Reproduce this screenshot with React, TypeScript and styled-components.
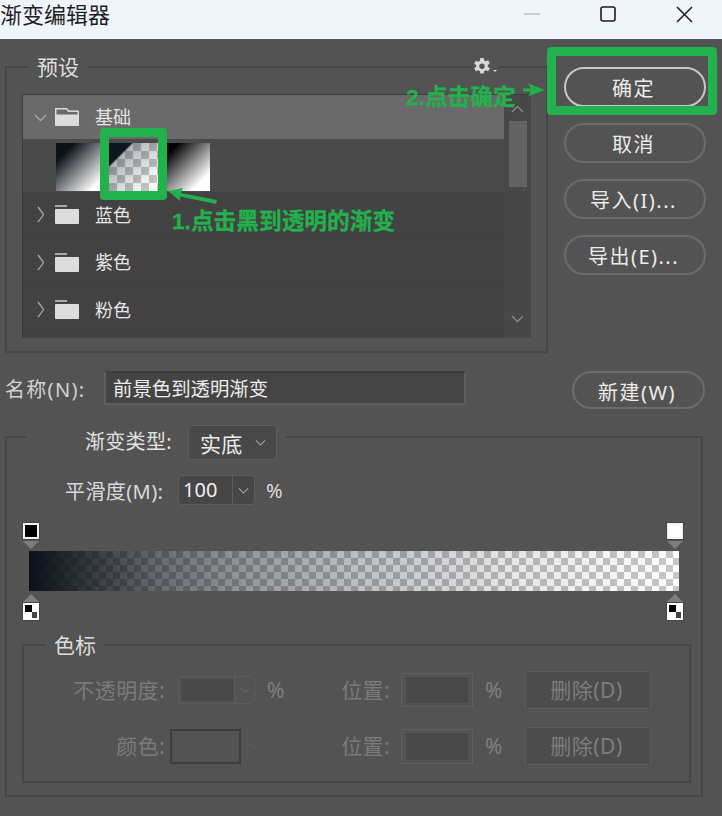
import React from 'react'
import styled, { createGlobalStyle } from 'styled-components'

const green = '#22b14c'
const checker = 'repeating-conic-gradient(#c6c6c6 0 25%, #ffffff 0 50%) 0 0 / 14px 14px'
const thumbChecker = 'repeating-conic-gradient(#c6c6c6 0 25%, #ffffff 0 50%) 0 0 / 16px 16px'

const GlobalStyle = createGlobalStyle`
  html, body {
    margin: 0;
    padding: 0;
    background: #535353;
  }
  * {
    box-sizing: border-box;
  }
`

const Page = styled.div`
  position: relative;
  width: 722px;
  height: 816px;
  overflow: hidden;
  background: #535353;
  color: #e4e4e4;
  font-family: "Noto Sans", "Noto Sans CJK SC", sans-serif;
  font-size: 19px;
`

// Window title bar
const TitleBar = styled.div`
  height: 39px;
  display: flex;
  align-items: flex-start;
  justify-content: space-between;
  background: #f0f4fb;
  color: #1f1f1f;
`

const Title = styled.div`
  font-size: 22px;
  line-height: 29px;
`

const WindowButtons = styled.div`
  display: flex;
`

const WindowButton = styled.div`
  width: 76px;
  height: 28px;
  display: flex;
  align-items: center;
  justify-content: center;
`

const Content = styled.div`
  padding: 15px 16px 0 5px;
`

const TopRow = styled.div`
  display: flex;
  gap: 16px;
`

// Sunken group box with the caption sitting on its border
const Group = styled.fieldset`
  position: relative;
  margin: 0;
  padding: 0;
  min-width: 0;
  border: 2px solid #464646;
`

const Caption = styled.legend<{ $left: number }>`
  margin-left: ${p => p.$left}px;
  padding: 0 8px;
  height: 26px;
  line-height: 26px;
  font-size: 21px;
  color: #dedede;
`

const PresetGroup = styled(Group)`
  width: 543px;
  height: 299px;
  padding: 14px 15px 0 15px;
`

const GearBox = styled.div`
  position: absolute;
  top: -23px;
  right: 47px;
  width: 27px;
  height: 20px;
  display: flex;
  align-items: center;
  justify-content: center;
  background: #535353;
`

const List = styled.div`
  display: flex;
  height: 244px;
  background: #424242;
  border: solid #3a3a3a;
  border-width: 1px 0 0 1px;
`

const ListRows = styled.div`
  width: 481px;
`

const FolderRow = styled.div<{ $active?: boolean; $h: number }>`
  height: ${p => p.$h}px;
  display: flex;
  align-items: center;
  padding-left: 11px;
  background: ${p => (p.$active ? '#6a6a6a' : '#424242')};
  border-bottom: ${p => (p.$active ? 'none' : '1px solid #3e3e3e')};
  font-size: 18px;
  color: #e6e6e6;
`

const ChevronSlot = styled.div<{ $inset?: number }>`
  width: 21px;
  display: flex;
  align-items: center;
  padding-left: ${p => p.$inset ?? 0}px;
`

const FolderName = styled.span`
  margin-left: 16px;
  padding-bottom: 2px;
`

const ThumbRow = styled.div`
  height: 53px;
  display: flex;
  align-items: flex-end;
  padding: 0 0 1px 33px;
  background: #4a4a4a;
`

const Thumb = styled.div<{ $fill: string; $w: number }>`
  width: ${p => p.$w}px;
  height: 48px;
  background: ${p => p.$fill};
`

const ScrollTrack = styled.div`
  flex: 1;
  display: flex;
  flex-direction: column;
  align-items: center;
  padding-top: 8px;
  background: #474747;
`

const ScrollThumb = styled.div`
  width: 18px;
  height: 66px;
  margin: 5px 0 125px;
  background: #636363;
`

const ButtonColumn = styled.div`
  display: flex;
  flex-direction: column;
  gap: 16px;
  padding-top: 13px;
`

const PillButton = styled.div<{ $primary?: boolean; $w?: number; $h?: number }>`
  width: ${p => p.$w ?? 142}px;
  height: ${p => p.$h ?? 40}px;
  display: flex;
  align-items: center;
  justify-content: center;
  padding-right: 3px;
  border-radius: 20px;
  border: ${p => (p.$primary ? '2px solid #c8c8c8' : '2px solid #6c6c6c')};
  font-size: 20px;
  letter-spacing: 1.5px;
  color: #ececec;
`

const NameRow = styled.div`
  display: flex;
  align-items: flex-start;
  margin-top: 18px;
`

const NameLabel = styled.div`
  width: 99px;
  height: 34px;
  padding-top: 2px;
  line-height: 34px;
  font-size: 20px;
  letter-spacing: 1.3px;
  color: #d2d2d2;
`

const NameInput = styled.div`
  width: 362px;
  height: 34px;
  line-height: 32px;
  padding-left: 7px;
  background: #444444;
  border: 2px solid #5e5e5e;
  border-top-color: #3f3f3f;
  font-size: 19.400px;
  color: #ececec;
`

const NewButton = styled(PillButton)`
  margin-left: 106px;
  padding-top: 2px;
`

const GradientGroup = styled(Group)`
  width: 698px;
  height: 372px;
  margin-top: 16px;
`

const TypeCaption = styled.legend`
  display: flex;
  align-items: flex-start;
  height: 24px;
  margin-left: 19px;
  padding: 0 9px 0 59px;
  font-size: 20px;
  letter-spacing: 0.3px;
  color: #e2e2e2;
`

const TypeLabel = styled.span`
  line-height: 33px;
  width: 103px;
`

const Select = styled.div`
  width: 89px;
  height: 35px;
  display: flex;
  align-items: center;
  justify-content: space-between;
  padding: 0 10px 0 11px;
  background: #484848;
  border: 1px solid #5e5e5e;
  border-radius: 4px;
  font-size: 21px;
  color: #ececec;
`

const SmoothRow = styled.div`
  display: flex;
  align-items: center;
  height: 30px;
  margin-top: 26px;
  padding-left: 58px;
`

const SmoothLabel = styled.span`
  width: 113px;
  font-size: 20px;
  letter-spacing: 0.4px;
  color: #dadada;
`

const Combo = styled.div<{ $off?: boolean; $h: number }>`
  width: 77px;
  height: ${p => p.$h}px;
  display: flex;
  background: ${p => (p.$off ? '#535353' : '#464646')};
  border: 1px solid ${p => (p.$off ? '#5c5c5c' : '#5e5e5e')};
  border-radius: 4px;
`

const ComboText = styled.div<{ $off?: boolean }>`
  width: 53px;
  padding-left: 4px;
  margin: ${p => (p.$off ? '2px 0 2px 2px' : 0)};
  background: ${p => (p.$off ? '#484848' : 'transparent')};
  font-size: 20px;
  line-height: 28px;
  color: #f0f0f0;
`

const ComboArrow = styled.div`
  flex: 1;
  display: flex;
  align-items: center;
  justify-content: center;
  border-left: 1px solid #5e5e5e;
`

const Percent = styled.span<{ $off?: boolean }>`
  margin-left: ${p => (p.$off ? 12 : 11)}px;
  font-size: ${p => (p.$off ? 21 : 20)}px;
  color: ${p => (p.$off ? '#7f7f7f' : '#dcdcdc')};
`

// Gradient strip with its stops
const Editor = styled.div`
  position: relative;
  height: 97px;
  margin: 18px 22px 0 22px;
  padding-top: 28px;
`

const GradientBar = styled.div`
  height: 40px;
  background: linear-gradient(
      90deg,
      rgba(11, 16, 24, 1) 0%,
      rgba(11, 16, 24, 0.8) 11%,
      rgba(11, 16, 24, 0.62) 20%,
      rgba(11, 16, 24, 0.45) 32%,
      rgba(11, 16, 24, 0.27) 50%,
      rgba(11, 16, 24, 0.1) 75%,
      rgba(11, 16, 24, 0) 100%
    ),
    ${checker};
`

const Stop = styled.div<{ $side: 'left' | 'right'; $bottom?: boolean }>`
  position: absolute;
  ${p => (p.$side === 'left' ? 'left: -6px;' : 'right: -4px;')}
  ${p => (p.$bottom ? 'bottom: 0;' : 'top: 0;')}
  display: flex;
  flex-direction: ${p => (p.$bottom ? 'column-reverse' : 'column')};
  align-items: center;
`

const StopBox = styled.div<{ $fill: string }>`
  width: 16px;
  height: 16px;
  background: ${p => p.$fill};
  border: 2px solid #f4f4f4;
  outline: 1px solid #444444;
`

const OpacityBox = styled.div`
  position: relative;
  width: 16px;
  height: 17px;
  background: #ffffff;
  outline: 1px solid #444444;
  &::before {
    content: '';
    position: absolute;
    left: 2px;
    top: 2px;
    width: 7px;
    height: 7px;
    background: #000000;
  }
  &::after {
    content: '';
    position: absolute;
    right: 2px;
    bottom: 2px;
    width: 5px;
    height: 6px;
    background: #444444;
  }
`

const Triangle = styled.div<{ $up?: boolean }>`
  width: 16px;
  height: 8px;
  margin: ${p => (p.$up ? '0 0 1px' : '2px 0 0')};
  background: #7e7e7e;
  clip-path: ${p =>
    p.$up ? 'polygon(50% 0, 100% 100%, 0 100%)' : 'polygon(0 0, 100% 0, 50% 100%)'};
`

const StopsGroup = styled(Group)`
  width: 669px;
  height: 151px;
  margin: 12px 0 0 15px;
`

const StopsGrid = styled.div`
  display: grid;
  grid-template-columns: 141px 163px 62px 135px 126px;
  grid-auto-rows: 38px;
  row-gap: 18px;
  align-items: center;
  padding-top: 13px;
`

const DimLabel = styled.div`
  padding-bottom: 2px;
  text-align: right;
  font-size: 21px;
  letter-spacing: 0.4px;
  color: #7b7b7b;
`

const ControlCell = styled.div<{ $left: number }>`
  display: flex;
  align-items: center;
  padding-left: ${p => p.$left}px;
`

const Swatch = styled.div`
  width: 71px;
  height: 35px;
  margin-right: 7px;
  background: #535353;
  border: 2px solid #3d3d3d;
`

const DimInput = styled.div<{ $h: number }>`
  width: 72px;
  height: ${p => p.$h}px;
  padding: 3px 4px;
  border: 1px solid #5f5f5f;
  &::before {
    content: '';
    display: block;
    height: 100%;
    background: #484848;
  }
`

const DimButton = styled.div`
  height: 38px;
  display: flex;
  align-items: center;
  justify-content: center;
  padding: 0 3px 2px 0;
  background: #4c4c4c;
  border: 1px solid #5c5c5c;
  border-radius: 3px;
  font-size: 21px;
  letter-spacing: 0.5px;
  color: #7d7d7d;
`

// Green notes drawn on top of the screenshot
const Ring = styled.div<{ $x: number; $y: number; $w: number; $h: number }>`
  position: absolute;
  left: ${p => p.$x}px;
  top: ${p => p.$y}px;
  width: ${p => p.$w}px;
  height: ${p => p.$h}px;
  border: 9px solid ${green};
  border-radius: 4px;
`

const Note = styled.div<{ $x: number; $y: number }>`
  position: absolute;
  left: ${p => p.$x}px;
  top: ${p => p.$y}px;
  font-family: "Liberation Sans", "Noto Sans CJK SC", sans-serif;
  font-size: 22.700px;
  font-weight: 700;
  line-height: 30px;
  white-space: nowrap;
  color: ${green};
  -webkit-text-stroke: 0.3px ${green};
`

const ArrowSvg = styled.svg<{ $x: number; $y: number }>`
  position: absolute;
  left: ${p => p.$x}px;
  top: ${p => p.$y}px;
`

function Chevron({ dir, color = '#a8a8a8', size = 13 }: { dir: 'up' | 'down'; color?: string; size?: number }) {
  const d = dir === 'down' ? 'M1 4l5.500 5.500L12 4' : 'M1 9l5.500-5.500L12 9'
  return (
    <svg width={size} height={size} viewBox="0 0 13 13" fill="none" stroke={color} strokeWidth={1.3}>
      <path d={d} />
    </svg>
  )
}

function ChevronRight() {
  return (
    <svg width="8" height="17" viewBox="0 0 8 17" fill="none" stroke="#a8a8a8" strokeWidth={1.3}>
      <path d="M1 1c2 2.500 4 5 5.500 7.500C5 11 3 13.500 1 16" />
    </svg>
  )
}

function Folder({ open }: { open?: boolean }) {
  if (open) {
    return (
      <svg width="24" height="18" viewBox="0 0 24 18" fill="#dcdcdc">
        <path
          fillRule="evenodd"
          d="M0 0h12l2 2.500h10V18H0zM1.500 1.500v5h21v-2.500H13.300l-2-2.500z"
        />
      </svg>
    )
  }
  return (
    <svg width="24" height="19" viewBox="0 0 24 19" fill="#dcdcdc">
      <path d="M0 0h12v2H0z" fill="#a8a8a8" />
      <path d="M1 4h22a1 1 0 0 1 1 1v13a1 1 0 0 1-1 1H1a1 1 0 0 1-1-1V5a1 1 0 0 1 1-1z" />
    </svg>
  )
}

function Gear() {
  return (
    <svg width="25" height="18" viewBox="0 0 25 18" fill="#d8d8d8">
      <path
        fillRule="evenodd"
        d="M7.300 0h3.400l.5 2.500 1.500.8 2.400-1 1.700 3-2 1.600v1.800l2 1.600-1.700 3-2.400-1-1.500.8-.5 2.500H7.300l-.5-2.500-1.500-.8-2.400 1-1.700-3 2-1.600V7.300l-2-1.600 1.700-3 2.400 1 1.500-.8zM9 5.500a2.700 2.700 0 1 0 0 5.400 2.700 2.700 0 0 0 0-5.400z"
      />
      <path d="M20 12h4l-2 2z" />
    </svg>
  )
}

const folders = [
  { name: '蓝色', h: 46 },
  { name: '紫色', h: 49 },
  { name: '粉色', h: 46 },
]

export default function App() {
  return (
    <Page>
      <GlobalStyle />
      <TitleBar>
        <Title>渐变编辑器</Title>
        <WindowButtons>
          <WindowButton>
            <svg width="16" height="2" viewBox="0 0 16 2">
              <path d="M0 1h16" stroke="#b8bbc2" strokeWidth="1.400" />
            </svg>
          </WindowButton>
          <WindowButton>
            <svg width="16" height="16" viewBox="0 0 16 16" fill="none">
              <rect x="1" y="1" width="14" height="14" rx="2" stroke="#1c1c1c" strokeWidth="1.600" />
            </svg>
          </WindowButton>
          <WindowButton>
            <svg width="17" height="17" viewBox="0 0 17 17" fill="none">
              <path d="M1 1l15 15M16 1L1 16" stroke="#1c1c1c" strokeWidth="1.500" />
            </svg>
          </WindowButton>
        </WindowButtons>
      </TitleBar>

      <Content>
        <TopRow>
          <PresetGroup>
            <Caption $left={7}>预设</Caption>
            <GearBox>
              <Gear />
            </GearBox>
            <List>
              <ListRows>
                <FolderRow $active $h={44}>
                  <ChevronSlot>
                    <Chevron dir="down" />
                  </ChevronSlot>
                  <Folder open />
                  <FolderName>基础</FolderName>
                </FolderRow>
                <ThumbRow>
                  <Thumb $w={53} $fill="linear-gradient(135deg, #0c1118 18%, #ffffff 82%)" />
                  <Thumb
                    $w={49}
                    $fill={`linear-gradient(135deg, #0c1520 23%, rgba(12, 21, 32, 0.32) 26%, rgba(12, 21, 32, 0) 88%), ${thumbChecker}`}
                  />
                  <Thumb $w={52} $fill="linear-gradient(135deg, #000000 20%, #ffffff 82%)" />
                </ThumbRow>
                {folders.map(f => (
                  <FolderRow key={f.name} $h={f.h}>
                    <ChevronSlot $inset={3}>
                      <ChevronRight />
                    </ChevronSlot>
                    <Folder />
                    <FolderName>{f.name}</FolderName>
                  </FolderRow>
                ))}
              </ListRows>
              <ScrollTrack>
                <Chevron dir="up" color="#8e8e8e" />
                <ScrollThumb />
                <Chevron dir="down" color="#8e8e8e" />
              </ScrollTrack>
            </List>
          </PresetGroup>
          <ButtonColumn>
            <PillButton $primary>确定</PillButton>
            <PillButton>取消</PillButton>
            <PillButton>导入(I)...</PillButton>
            <PillButton>导出(E)...</PillButton>
          </ButtonColumn>
        </TopRow>

        <NameRow>
          <NameLabel>名称(N):</NameLabel>
          <NameInput>前景色到透明渐变</NameInput>
          <NewButton $w={133} $h={38}>新建(W)</NewButton>
        </NameRow>

        <GradientGroup>
          <TypeCaption>
            <TypeLabel>渐变类型:</TypeLabel>
            <Select>
              实底
              <Chevron dir="down" size={11} />
            </Select>
          </TypeCaption>
          <SmoothRow>
            <SmoothLabel>平滑度(M):</SmoothLabel>
            <Combo $h={30}>
              <ComboText>100</ComboText>
              <ComboArrow>
                <Chevron dir="down" size={11} />
              </ComboArrow>
            </Combo>
            <Percent>%</Percent>
          </SmoothRow>

          <Editor>
            <Stop $side="left">
              <StopBox $fill="#000000" />
              <Triangle />
            </Stop>
            <Stop $side="right">
              <StopBox $fill="#ffffff" />
              <Triangle />
            </Stop>
            <GradientBar />
            <Stop $side="left" $bottom>
              <OpacityBox />
              <Triangle $up />
            </Stop>
            <Stop $side="right" $bottom>
              <OpacityBox />
              <Triangle $up />
            </Stop>
          </Editor>

          <StopsGroup>
            <Caption $left={22}>色标</Caption>
            <StopsGrid>
              <DimLabel>不透明度:</DimLabel>
              <ControlCell $left={13}>
                <Combo $off $h={28}>
                  <ComboText $off />
                  <ComboArrow>
                    <Chevron dir="down" color="#6e6e6e" size={10} />
                  </ComboArrow>
                </Combo>
                <Percent $off>%</Percent>
              </ControlCell>
              <DimLabel>位置:</DimLabel>
              <ControlCell $left={11}>
                <DimInput $h={34} />
                <Percent $off>%</Percent>
              </ControlCell>
              <DimButton>删除(D)</DimButton>

              <DimLabel>颜色:</DimLabel>
              <ControlCell $left={5}>
                <Swatch />
                <Chevron dir="down" color="#636363" size={10} />
              </ControlCell>
              <DimLabel>位置:</DimLabel>
              <ControlCell $left={11}>
                <DimInput $h={35} />
                <Percent $off>%</Percent>
              </ControlCell>
              <DimButton>删除(D)</DimButton>
            </StopsGrid>
          </StopsGroup>
        </GradientGroup>
      </Content>

      <Ring $x={100} $y={128} $w={67} $h={72} />
      <Ring $x={547} $y={47} $w={170} $h={68} />
      <Note $x={406} $y={82}>2.点击确定</Note>
      <Note $x={172} $y={206}>1.点击黑到透明的渐变</Note>
      <ArrowSvg $x={520} $y={80} width="28" height="20" viewBox="0 0 28 20" fill={green}>
        <path d="M3 8.500h8L8 3.500 25 10 8 16.500l3-5H3z" />
      </ArrowSvg>
      <ArrowSvg $x={166} $y={186} width="54" height="24" viewBox="0 0 54 24" fill={green}>
        <path d="M2 5L17 2L15 7L51 14L50 18L14 10.500L14 15z" />
      </ArrowSvg>
    </Page>
  )
}
